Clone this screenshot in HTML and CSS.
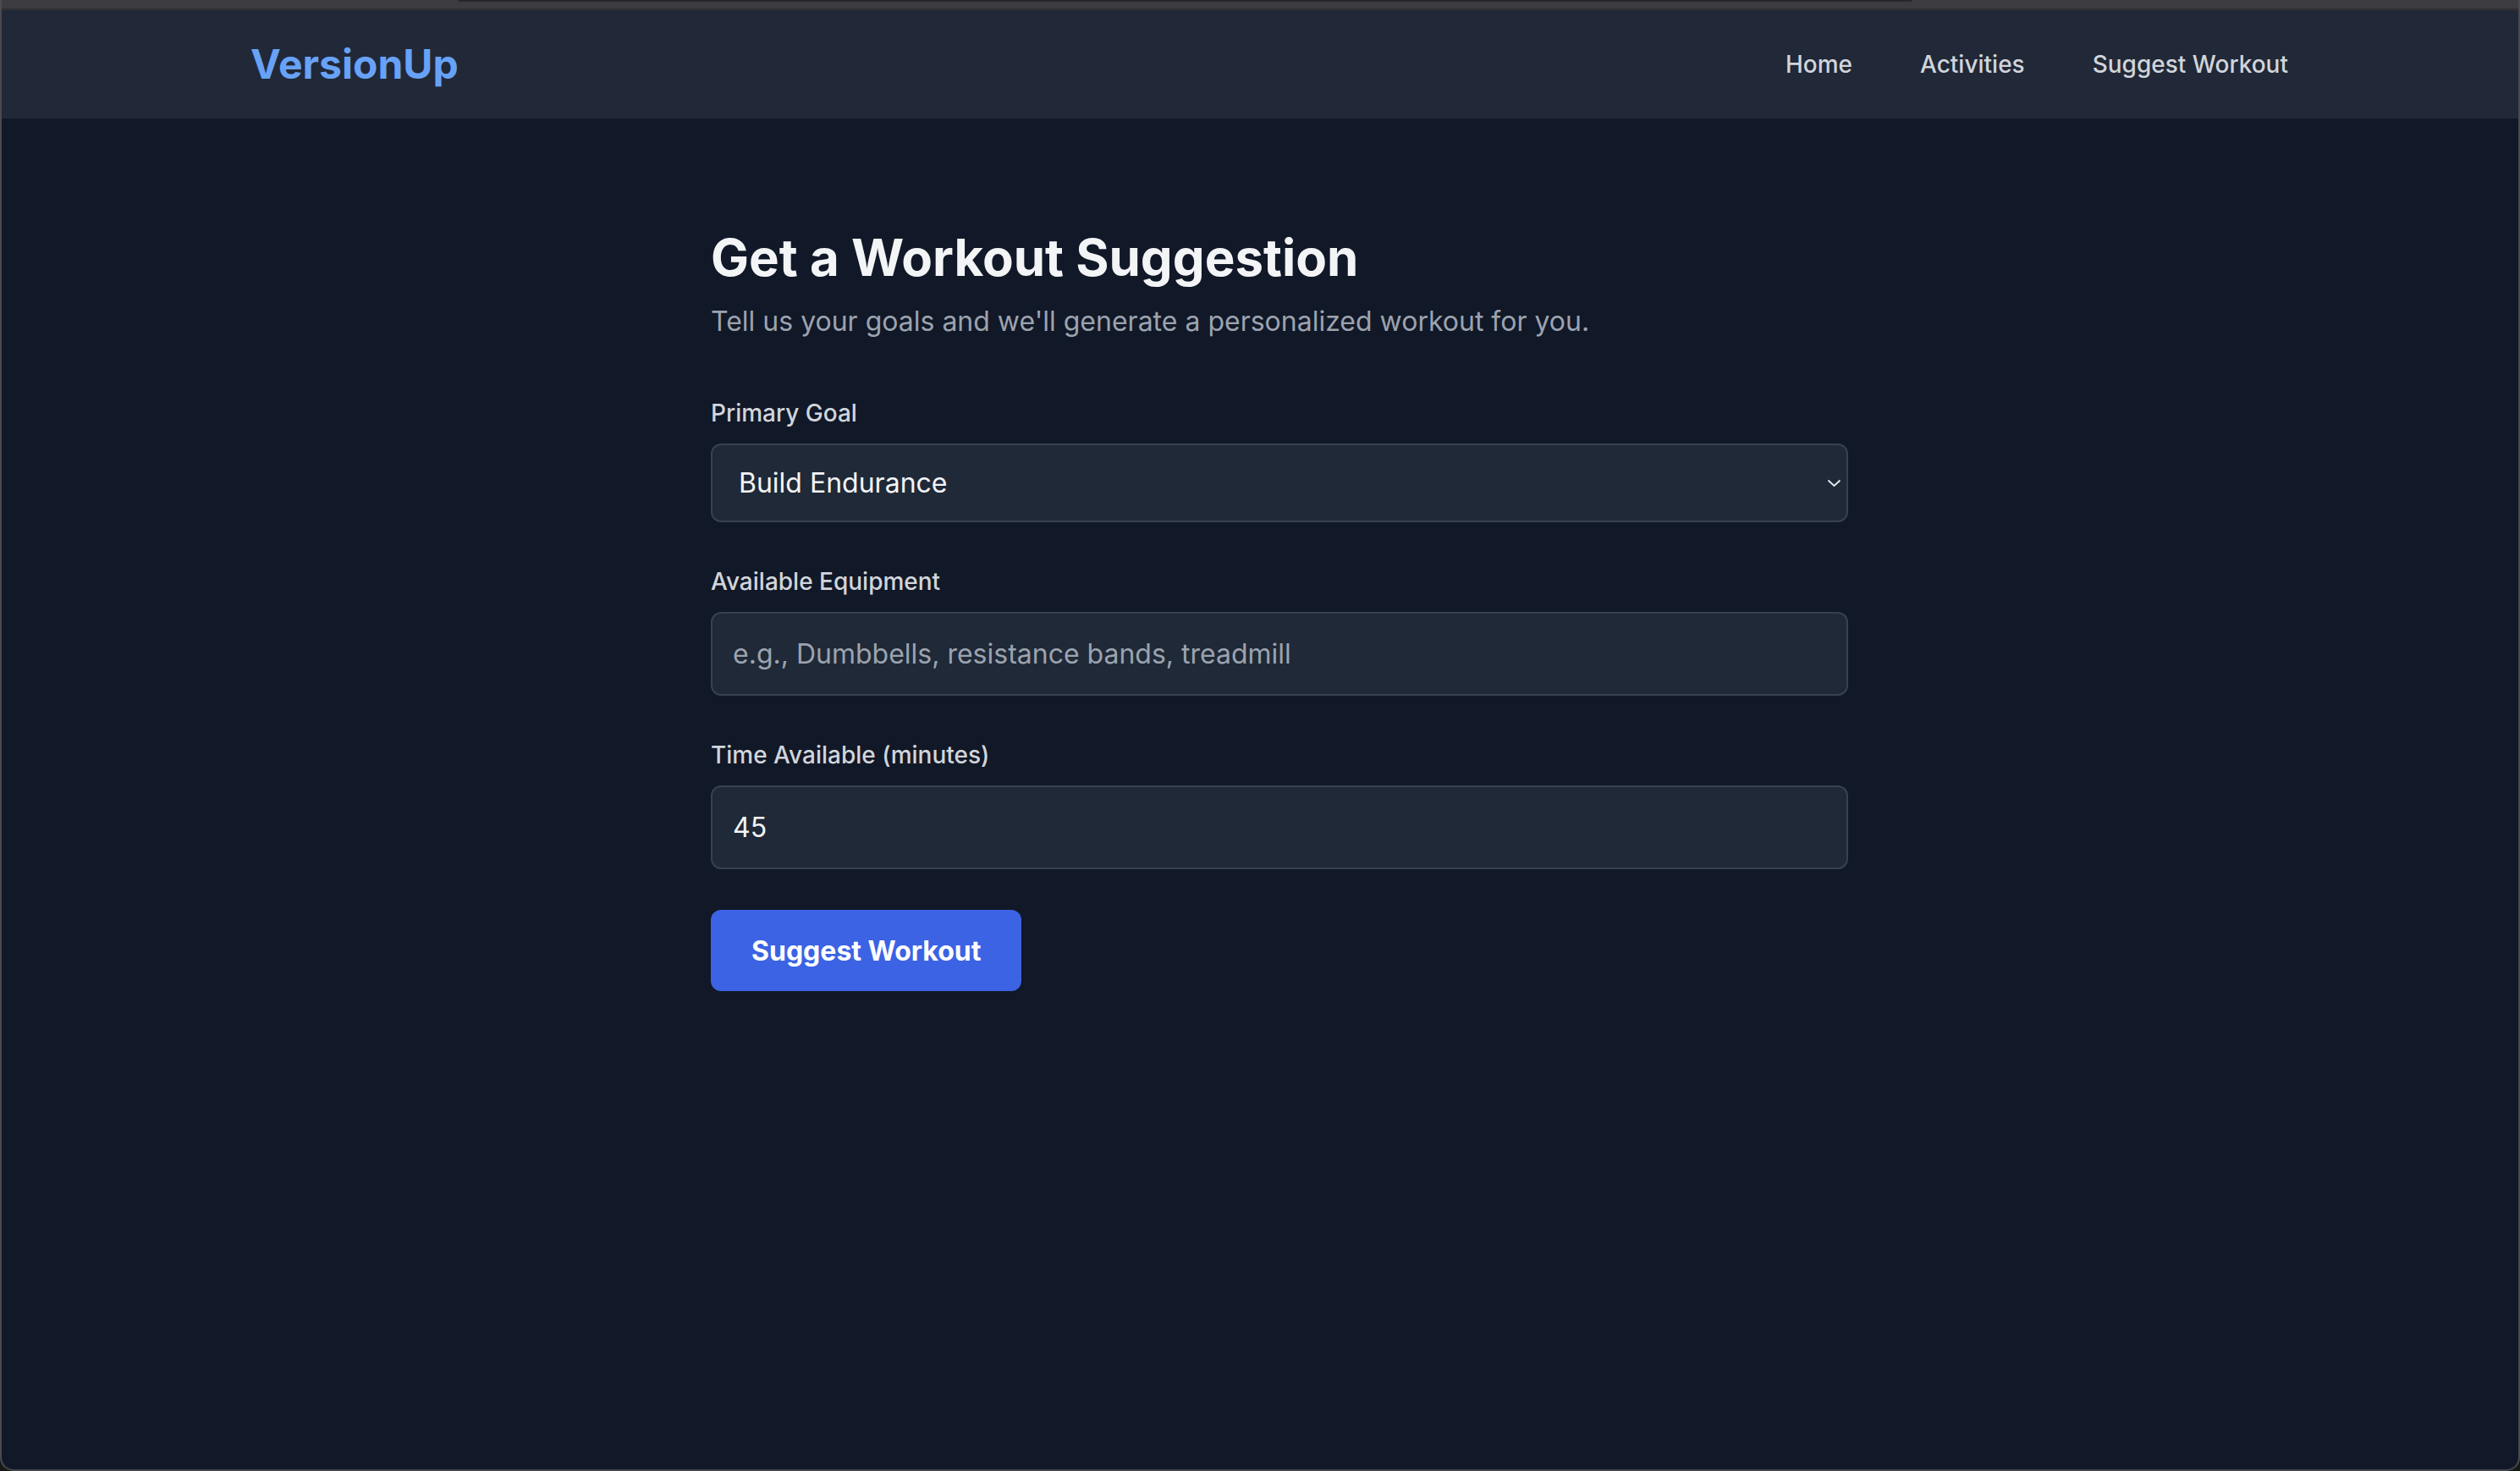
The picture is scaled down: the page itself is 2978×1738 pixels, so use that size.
FILE: index.html
```html
<!DOCTYPE html>
<html lang="en">
<head>
<meta charset="utf-8">
<title>VersionUp - Suggest Workout</title>
<link rel="stylesheet" href="styles.css">
</head>
<body>
<div class="window">
  <div class="topstrip"><div class="topbar"></div></div>
  <header class="header">
    <a class="logo" href="#">VersionUp</a>
    <nav class="nav">
      <a href="#">Home</a>
      <a href="#">Activities</a>
      <a href="#">Suggest Workout</a>
    </nav>
  </header>
  <main class="main">
    <div class="col">
      <h1 class="title">Get a Workout Suggestion</h1>
      <p class="subtitle">Tell us your goals and we'll generate a personalized workout for you.</p>
      <form class="form">
        <div class="field">
          <label class="label" for="goal">Primary Goal</label>
          <div class="select-wrap">
            <select id="goal" class="control select">
              <option>Build Endurance</option>
              <option>Build Strength</option>
              <option>Lose Weight</option>
            </select>
            <svg class="chev" width="17" height="10" viewBox="0 0 17 10"><path d="M1.5 1.5 L8.5 8 L15.5 1.5" fill="none" stroke="#e5e7eb" stroke-width="2"/></svg>
          </div>
        </div>
        <div class="field">
          <label class="label" for="equip">Available Equipment</label>
          <input id="equip" class="control input" type="text" placeholder="e.g., Dumbbells, resistance bands, treadmill">
        </div>
        <div class="field">
          <label class="label" for="time">Time Available (minutes)</label>
          <input id="time" class="control input" type="text" value="45">
        </div>
        <div class="actions">
          <button type="button" class="btn">Suggest Workout</button>
        </div>
      </form>
    </div>
  </main>
</div>
</body>
</html>
```

FILE: styles.css
```css
html, body {
  margin: 0;
  padding: 0;
  background: #161a16;
}
body {
  font-family: Inter, "Noto Sans", sans-serif;
}
.window {
  width: 2978px;
  height: 1738px;
  box-sizing: border-box;
  border-left: 2px solid #4a4a50;
  border-right: 2px solid #4a4a50;
  border-bottom: 2px solid #45464e;
  border-radius: 0 0 16px 16px;
  background: #111827;
  overflow: hidden;
  display: flex;
  flex-direction: column;
}
.topstrip {
  height: 12px;
  box-sizing: border-box;
  background: #3c3c40;
  border-bottom: 2px solid #303034;
  padding-left: 539px;
  display: flex;
  align-items: flex-start;
}
.topbar {
  width: 1719px;
  height: 2px;
  background: #27272a;
  border-radius: 0 0 3px 3px;
}
.header {
  height: 128px;
  background: #212837;
  display: flex;
  align-items: center;
  justify-content: space-between;
  padding: 0 272px 0 294px;
}
.logo {
  font-size: 48px;
  line-height: 64px;
  font-weight: 700;
  color: #67a2f7;
  text-decoration: none;
}
.nav {
  display: flex;
  gap: 80px;
}
.nav a {
  font-size: 28px;
  line-height: 40px;
  font-weight: 500;
  color: #d1d5db;
  text-decoration: none;
}
.main {
  padding: 128px 0 0 838px;
}
.col {
  width: 1344px;
}
.title {
  margin: 0;
  font-size: 60px;
  line-height: 72px;
  font-weight: 700;
  color: #f3f4f6;
}
.subtitle {
  margin: 16px 0 0;
  font-size: 32px;
  line-height: 48px;
  color: #9ca3af;
}
.form {
  margin-top: 64px;
  display: flex;
  flex-direction: column;
  gap: 50px;
}
.field {
  display: flex;
  flex-direction: column;
  gap: 16px;
}
.label {
  font-size: 28px;
  line-height: 40px;
  font-weight: 500;
  color: #d1d5db;
}
.control {
  width: 100%;
  box-sizing: border-box;
  background: #1f2937;
  border: 2px solid #374151;
  border-radius: 12px;
  font-family: Inter, "Noto Sans", sans-serif;
  font-size: 32px;
  color: #f3f4f6;
  outline: none;
  margin: 0;
}
.input {
  height: 99px;
  padding: 0 24px;
}
.input::placeholder {
  color: #9ca3af;
}
.select-wrap {
  position: relative;
}
.select {
  height: 93px;
  padding: 0 60px 0 31px;
  appearance: none;
  -webkit-appearance: none;
  display: block;
}
.chev {
  position: absolute;
  right: 8px;
  top: 50%;
  transform: translateY(-50%);
  pointer-events: none;
}
.actions {
  margin-top: -2px;
  display: flex;
}
.btn {
  height: 96px;
  padding: 0 48px;
  border: 0;
  border-radius: 12px;
  background: #3b63e4;
  color: #ffffff;
  font-family: Inter, "Noto Sans", sans-serif;
  font-size: 32px;
  font-weight: 700;
  cursor: pointer;
}
```
